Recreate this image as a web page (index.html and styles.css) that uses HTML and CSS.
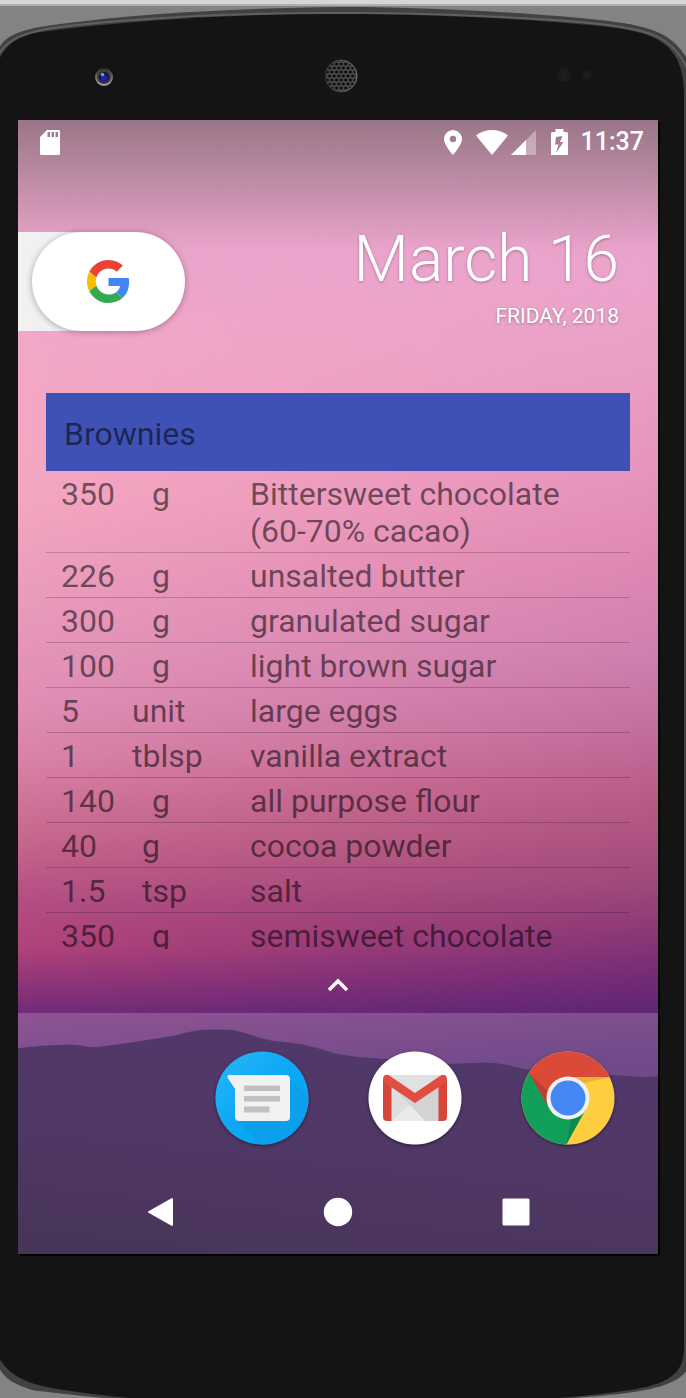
FILE: index.html
```html
<!DOCTYPE html>
<html lang="en">
<head>
<meta charset="utf-8">
<meta name="viewport" content="width=device-width, initial-scale=1">
<title>Recipe widget</title>
<link rel="stylesheet" href="styles.css">
</head>
<body>
<div class="desk">
<svg class="shell" viewBox="0 0 686 1392" preserveAspectRatio="none" aria-hidden="true">
  <path d="M-2 44C6 26 30 22 60 18C150 6 250 2 343 1C440 1 540 8 600 14C650 20 672 26 688 54V1361C676 1378 650 1383 600 1388C560 1391 520 1394 480 1396H180C120 1392 60 1386 32 1382C12 1376 4 1370 -2 1358Z" fill="#414142"/>
  <path d="M-2 50C6 32 30 25 60 21C150 10 250 7 343 7C440 7 540 12 600 18C650 24 672 30 687 62" fill="none" stroke="#606062" stroke-width="2"/>
  <path d="M-2 56C6 36 20 30 40 26C150 12 250 8 343 8C440 8 540 14 600 20C650 26 684 32 684 90V1340C684 1366 668 1376 630 1382C590 1388 550 1391 500 1394H180C120 1390 70 1384 42 1378C16 1372 4 1360 -2 1348Z" fill="#141414"/>
</svg>
<div class="phone">
  <div class="forehead">
    <svg class="camera" viewBox="0 0 20 20" aria-hidden="true">
      <defs><linearGradient id="ring" x1="0" y1="0" x2="0" y2="1"><stop offset="0" stop-color="#2c2c2c"/><stop offset="1" stop-color="#a8a8a8"/></linearGradient></defs>
      <circle cx="10" cy="10" r="9" fill="url(#ring)"/><circle cx="10" cy="10" r="7" fill="#3c3c3c"/>
      <circle cx="10" cy="10" r="5" fill="#15151f"/><circle cx="10" cy="11" r="3.500" fill="#2020b4"/><circle cx="8.500" cy="7.500" r="1.800" fill="#8e9ab0"/>
    </svg>
    <svg class="speaker" viewBox="0 0 34 34" aria-hidden="true">
      <defs><pattern id="mesh" width="4.600" height="8" patternUnits="userSpaceOnUse" x="1" y="3"><circle cx="2.300" cy="2" r="1.600" fill="#0c0c0c"/><circle cx="0" cy="6" r="1.600" fill="#0c0c0c"/><circle cx="4.600" cy="6" r="1.600" fill="#0c0c0c"/></pattern>
      <linearGradient id="grille"><stop offset="0" stop-color="#222"/><stop offset="1" stop-color="#777"/></linearGradient></defs>
      <circle cx="17" cy="17" r="16" fill="#4b4b4b" stroke="url(#grille)"/><circle cx="17" cy="17" r="15" fill="url(#mesh)"/>
    </svg>
    <svg class="sensors" viewBox="0 0 40 20" aria-hidden="true">
      <circle cx="9" cy="10" r="7" fill="#1d1c1c"/><circle cx="32" cy="10" r="5" fill="#1c1b1b"/><circle cx="10" cy="12" r="1" fill="#4a2018"/><circle cx="32" cy="11" r="1" fill="#4a2018"/>
    </svg>
  </div>
  <main class="screen">
    <header class="status">
      <svg class="sd" viewBox="0 0 20 25" role="img" aria-label="SD card"><path fill="#fff" fill-rule="evenodd" d="M7 0H18.500Q20 0 20 1.500V23.500Q20 25 18.500 25H1.500Q0 25 0 23.500V7ZM7.500 2V7H10V2ZM11.500 2V7H14V2ZM15.500 2V7H18V2Z"/></svg>
      <div class="status-icons">
        <svg class="pin" viewBox="0 0 18 25" role="img" aria-label="Location"><path fill="#fff" fill-rule="evenodd" d="M9 0A9 9 0 0 1 18 9C18 15 9 25 9 25S0 15 0 9A9 9 0 0 1 9 0ZM9 5.800A3.200 3.200 0 1 0 9 12.200A3.200 3.200 0 1 0 9 5.800Z"/></svg>
        <svg class="wifi" viewBox="0 0 32 25" role="img" aria-label="Wi-Fi"><path fill="#fff" d="M0 5.500Q7 0 16 0T32 5.500L16 25Z"/></svg>
        <svg class="cell" viewBox="0 0 25 25" role="img" aria-label="Signal"><path fill="#fff" fill-opacity=".35" d="M25 0V25H0Z"/><path fill="#fff" d="M15 10V25H0Z"/></svg>
        <svg class="battery" viewBox="0 0 17 26" role="img" aria-label="Charging"><path fill="#fff" fill-rule="evenodd" d="M4.500 0H12.500V3H15.500Q17 3 17 4.500V26H0V4.500Q0 3 1.500 3H4.500ZM11.500 7L5 8L4 15.500H7.500L5 24L12.500 13H9Z"/></svg>
        <time class="clock">11:37</time>
      </div>
    </header>
    <section class="top">
      <div class="search">
        <button class="pill" type="button" aria-label="Google search">
          <svg class="glogo" viewBox="0 0 48 48" aria-hidden="true"><path fill="#EA4335" d="M24 9.500c3.540 0 6.710 1.220 9.210 3.600l6.850-6.850C35.900 2.380 30.470 0 24 0 14.620 0 6.510 5.380 2.560 13.220l7.980 6.190C12.430 13.720 17.740 9.500 24 9.500z"/><path fill="#4285F4" d="M46.980 24.550c0-1.570-.15-3.090-.38-4.550H24v9.020h12.940c-.58 2.960-2.260 5.480-4.780 7.180l7.730 6c4.510-4.180 7.090-10.360 7.090-17.650z"/><path fill="#FBBC05" d="M10.530 28.590c-.48-1.450-.76-2.990-.76-4.590s.27-3.140.76-4.590l-7.980-6.190C.92 16.460 0 20.120 0 24c0 3.880.92 7.540 2.560 10.780l7.970-6.190z"/><path fill="#34A853" d="M24 48c6.480 0 11.930-2.130 15.890-5.810l-7.730-6c-2.150 1.450-4.920 2.300-8.160 2.300-6.260 0-11.570-4.220-13.470-9.910l-7.980 6.190C6.510 42.620 14.620 48 24 48z"/></svg>
        </button>
      </div>
      <div class="date">
        <div class="day">March 16</div>
        <div class="year">FRIDAY, 2018</div>
      </div>
    </section>
    <section class="widget">
      <h1 class="title">Brownies</h1>
      <div class="list">
        <table class="items">
          <tbody>
            <tr><td class="qty">350</td><td class="unit wide">g</td><td>Bittersweet chocolate (60-70% cacao)</td></tr>
            <tr><td class="qty">226</td><td class="unit wide">g</td><td>unsalted butter</td></tr>
            <tr><td class="qty">300</td><td class="unit wide">g</td><td>granulated sugar</td></tr>
            <tr><td class="qty">100</td><td class="unit wide">g</td><td>light brown sugar</td></tr>
            <tr><td class="qty">5</td><td class="unit">unit</td><td>large eggs</td></tr>
            <tr><td class="qty">1</td><td class="unit">tblsp</td><td>vanilla extract</td></tr>
            <tr><td class="qty">140</td><td class="unit wide">g</td><td>all purpose flour</td></tr>
            <tr><td class="qty">40</td><td class="unit mid">g</td><td>cocoa powder</td></tr>
            <tr><td class="qty">1.5</td><td class="unit mid">tsp</td><td>salt</td></tr>
            <tr><td class="qty">350</td><td class="unit wide">g</td><td>semisweet chocolate</td></tr>
          </tbody>
        </table>
      </div>
    </section>
    <button class="drawer" type="button" aria-label="All apps"><svg class="chevron" viewBox="0 0 22 14" aria-hidden="true"><path d="M2 12L11 3L20 12" fill="none" stroke="#fff" stroke-width="3.500"/></svg></button>
    <div class="bottom">
      <svg class="hills" viewBox="0 0 640 240" preserveAspectRatio="none" aria-hidden="true">
        <defs><linearGradient id="hill" x1=".3" y1="0" x2="0" y2="1"><stop offset="0" stop-color="#51386a"/><stop offset=".5" stop-color="#4f3765"/><stop offset="1" stop-color="#483457"/></linearGradient></defs>
        <path fill="url(#hill)" d="M0 35C20 33 42 31 60 32C68 33 72 34 78 34C105 31 135 26 160 22C178 16 190 16 216 17C228 20 240 25 256 28C285 30 300 35 316 40C345 46 380 45 420 51C455 50 475 48 490 52C510 58 550 61 580 61C600 61 620 65 640 63V240H0Z"/>
      </svg>
      <nav class="dock" aria-label="Apps">
        <span></span>
        <button class="app" type="button" aria-label="Messages"><svg viewBox="0 0 94 94" aria-hidden="true"><defs><linearGradient id="msg" x1="0" y1="0" x2="1" y2="1"><stop offset="0" stop-color="#29b6f6"/><stop offset=".5" stop-color="#0ba8f5"/><stop offset="1" stop-color="#08a4f2"/></linearGradient><clipPath id="disc"><circle cx="47" cy="47" r="46.500"/></clipPath></defs><circle cx="47" cy="47" r="46.500" fill="url(#msg)"/><path clip-path="url(#disc)" fill="#0aa0ea" d="M73 26L94 46V94H46L21 69Z"/><path fill="#f1f1f1" d="M14 24H71Q75 24 75 28V66Q75 70 71 70H24Q20 70 20 66V38L12.500 26.500Q12 24 14 24Z"/><path fill="#c0c0c0" d="M29 34.500H65V40H29ZM29 45H65V50.500H29ZM29 55.500H54.500V61.500H29Z"/></svg></button>
        <button class="app" type="button" aria-label="Gmail"><svg viewBox="0 0 94 94" aria-hidden="true"><circle cx="47" cy="47" r="46.500" fill="#fff"/><path fill="#e1e1e1" d="M22 24H72V70H22Z"/><path fill="#d3d3d3" d="M23 35L47 51L71 35V70H57Z"/><path fill="#eaeaea" d="M23 70L42 54L57 70Z"/><path fill="#dedede" d="M23 37V70L40 55Z"/><path fill="#d64538" d="M15 28L23.500 34V70H19Q15 70 15 66ZM79 28L70.500 34V70H75Q79 70 79 66Z"/><path fill="#df4e40" d="M15 28C15 24 19 22.500 22 25L47 42L72 25C75 22.500 79 24 79 28Q79 31 77 32L47 52L17 32Q15 31 15 28Z"/></svg></button>
        <button class="app" type="button" aria-label="Chrome"><svg viewBox="0 0 94 94" aria-hidden="true"><defs><clipPath id="ball"><circle cx="47" cy="47" r="46.500"/></clipPath></defs><g clip-path="url(#ball)"><path fill="#ffcd40" d="M0 0H94V94H0Z"/><path fill="#e8b12f" d="M47 26H89L62 32Z"/><path fill="#129f5a" d="M0 10H8L28.500 57.500L47 68L65.500 57.500L45 94H0Z"/><path fill="#0d8a4c" d="M62 62L50 68L45 94Z"/><path fill="#db4a39" d="M-4 -4H98V26H47L28 47L27 55L8 22Z"/><path fill="#bd3f31" d="M8 22L30 43L27 55Z"/></g><circle cx="47" cy="47" r="21.500" fill="#f1f1f1"/><circle cx="47" cy="47" r="17.500" fill="#4587f3"/></svg></button>
      </nav>
      <nav class="keys" aria-label="System">
        <button class="key" type="button" aria-label="Back"><svg viewBox="0 0 30 30" aria-hidden="true"><path fill="#fff" stroke="#fff" stroke-width="2" stroke-linejoin="round" d="M27 2V28L4 15Z"/></svg></button>
        <button class="key" type="button" aria-label="Home"><svg viewBox="0 0 30 30" aria-hidden="true"><circle cx="15" cy="15" r="14.200" fill="#fff"/></svg></button>
        <button class="key" type="button" aria-label="Recents"><svg viewBox="0 0 30 30" aria-hidden="true"><rect x="1.500" y="1.500" width="27" height="27" rx="1.500" fill="#fff"/></svg></button>
      </nav>
    </div>
  </main>
</div>
</div>
</body>
</html>
```
FILE: styles.css
```css
* { box-sizing: border-box; }
body {
  margin: 0;
  background: #838383;
  font-family: Roboto, "Liberation Sans", sans-serif;
}
button { border: 0; padding: 0; background: none; display: block; }
svg { display: block; }
.desk {
  position: relative;
  border-top: 4px solid #d6d6d6;
  box-shadow: inset 0 2px #adb0ad;
  min-height: 100vh;
  overflow: hidden;
}
.shell {
  position: absolute;
  inset: 2px 0 0;
  width: 100%;
  height: 100%;
}
.phone { position: relative; padding: 0 28px 144px 18px; }
.forehead {
  height: 116px;
  padding: 55px 63px 0 76px;
  display: flex;
  justify-content: space-between;
  align-items: flex-start;
}
.camera { width: 20px; height: 20px; margin-top: 8px; }
.speaker { width: 34px; height: 34px; margin-left: 12px; }
.sensors { width: 40px; height: 20px; margin-top: 6px; }
.screen {
  position: relative;
  isolation: isolate;
  display: flex;
  flex-direction: column;
  box-shadow: 2px 2px #000;
  background: linear-gradient(#e2a4ca 0, #eea6cc 15%, #f3a8c8 20%, #f5a7c0 33%, #ea9abb 43%, #e18fb6 51%, #db83a8 56%, #c8698f 63%, #b34e82 69%, #b0437a 73%, #9c3a78 75%, #702a78 79%);
}
/* Right side of the wallpaper darkens earlier than the left */
.screen::before {
  content: "";
  position: absolute;
  inset: 0;
  z-index: -1;
  background: linear-gradient(#dfa2c8 0, #eba3cb 14%, #e9a0c6 20%, #e692bd 32%, #df87b3 39%, #cf7fae 47%, #c4709f 53%, #b85a86 60%, #a04a7a 67%, #8f3a76 71%, #702a76 76%, #5c2673 79%);
  mask-image: linear-gradient(90deg, transparent, #000);
}
.screen::after {
  content: "";
  position: absolute;
  inset: 0 0 auto;
  height: 130px;
  z-index: -1;
  background: linear-gradient(rgba(64, 60, 50, .44), rgba(64, 60, 50, 0));
}
.status {
  height: 44px;
  padding: 0 14px 0 22px;
  display: flex;
  justify-content: space-between;
  align-items: center;
}
.status-icons { display: flex; align-items: center; }
.sd { width: 20px; height: 25px; }
.pin { width: 18px; height: 25px; margin-right: 14px; }
.wifi { width: 32px; height: 25px; margin-right: 3px; }
.cell { width: 25px; height: 25px; margin-right: 15px; }
.battery { width: 17px; height: 26px; margin-right: 13px; }
.clock { color: #fff; font-size: 25px; font-weight: 500; line-height: 30px; }
.top {
  display: flex;
  justify-content: space-between;
  padding: 68px 39px 62px 0;
}
.search {
  width: 118px;
  height: 99px;
  padding-left: 14px;
  background: linear-gradient(90deg, #f1f1f1 90px, transparent 90px);
}
.pill {
  width: 153px;
  height: 99px;
  border-radius: 50px;
  background: #fff;
  box-shadow: 0 1px 6px rgba(60, 40, 50, .4);
  display: flex;
  align-items: center;
  justify-content: center;
}
.glogo { width: 43px; height: 43px; }
.date {
  color: #fff;
  text-align: right;
  text-shadow: 0 1px 3px rgba(0, 0, 0, .3);
}
.day { font-size: 64px; font-weight: 300; line-height: 56px; }
.year { font-size: 21px; line-height: 26px; margin-top: 15px; }
.widget { padding: 0 28px; color: rgba(0, 0, 0, .54); }
.title {
  margin: 0;
  padding: 23px 18px 18px;
  background: #3f51b5;
  font-size: 32px;
  font-weight: 400;
  line-height: 37px;
}
.list { height: 478px; overflow: hidden; }
.items {
  width: 100%;
  border-collapse: separate;
  border-spacing: 0;
  table-layout: fixed;
  font-size: 32px;
  line-height: 37px;
}
.items td {
  padding: 5px 0 2px;
  vertical-align: top;
  border-bottom: 1px solid rgba(0, 0, 0, .2);
}
.items .qty { width: 86px; padding-left: 15px; }
.items .unit { width: 118px; }
.items td:last-child { padding-right: 60px; }
.items .mid { padding-left: 10px; }
.items .wide { padding-left: 20px; }
.drawer {
  height: 64px;
  display: flex;
  align-items: center;
  justify-content: center;
  padding-top: 8px;
}
.chevron { width: 22px; height: 14px; }
.bottom {
  position: relative;
  background: linear-gradient(176deg, #8f5393, #704a8a 90px);
}
.hills {
  position: absolute;
  inset: 0;
  width: 100%;
  height: 100%;
}
.dock {
  position: relative;
  display: grid;
  grid-template-columns: repeat(4, 1fr);
  padding: 38px 14px 20px;
  justify-items: center;
}
.app { width: 94px; height: 94px; border-radius: 50%; box-shadow: 0 1px 3px rgba(0, 0, 0, .4); }
.keys {
  position: relative;
  display: flex;
  justify-content: space-between;
  padding: 32px 127px 27px;
}
.key { width: 30px; height: 30px; }
```
